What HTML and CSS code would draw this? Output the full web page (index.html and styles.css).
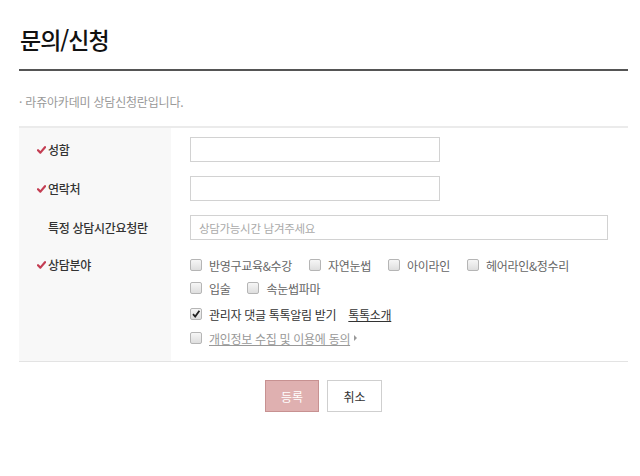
FILE: index.html
```html
<!DOCTYPE html>
<html lang="ko">
<head>
<meta charset="utf-8">
<link rel="stylesheet" href="styles.css">
</head>
<body>
<div class="page">
  <h1 class="title">문의/신청</h1>
  <p class="intro">· 라쥬아카데미 상담신청란입니다.</p>
  <div class="form-table">
    <div class="label"><span class="req"><svg width="9" height="8" viewBox="0 0 9 8"><path d="M1 4.2 L3.4 6.6 L8 1.2" fill="none" stroke="#c43d52" stroke-width="2.2" stroke-linecap="round" stroke-linejoin="round"/></svg></span>성함</div>
    <div class="field"><span class="input short"></span></div>

    <div class="label"><span class="req"><svg width="9" height="8" viewBox="0 0 9 8"><path d="M1 4.2 L3.4 6.6 L8 1.2" fill="none" stroke="#c43d52" stroke-width="2.2" stroke-linecap="round" stroke-linejoin="round"/></svg></span>연락처</div>
    <div class="field"><span class="input short"></span></div>

    <div class="label"><span class="req"></span>특정 상담시간요청란</div>
    <div class="field"><span class="input long"><span class="ph">상담가능시간 남겨주세요</span></span></div>

    <div class="label top"><span class="req"><svg width="9" height="8" viewBox="0 0 9 8"><path d="M1 4.2 L3.4 6.6 L8 1.2" fill="none" stroke="#c43d52" stroke-width="2.2" stroke-linecap="round" stroke-linejoin="round"/></svg></span>상담분야</div>
    <div class="field checks">
      <div class="line">
        <span class="opt"><span class="cb"></span>반영구교육&amp;수강</span>
        <span class="opt"><span class="cb"></span>자연눈썹</span>
        <span class="opt"><span class="cb"></span>아이라인</span>
        <span class="opt"><span class="cb"></span>헤어라인&amp;정수리</span>
      </div>
      <div class="line">
        <span class="opt"><span class="cb"></span>입술</span>
        <span class="opt"><span class="cb"></span>속눈썹파마</span>
      </div>
      <div class="line agree">
        <span class="opt dark"><span class="cb on"><svg width="10" height="10" viewBox="0 0 10 10"><path d="M2 5.2 L4.2 7.6 L8.4 1.8" fill="none" stroke="#222" stroke-width="1.8"/></svg></span>관리자 댓글 톡톡알림 받기</span>
        <a class="link dark">톡톡소개</a>
      </div>
      <div class="line">
        <span class="opt"><span class="cb"></span><a class="link">개인정보 수집 및 이용에 동의</a><span class="arrow"></span></span>
      </div>
    </div>
  </div>
  <div class="buttons">
    <span class="btn submit">등록</span>
    <span class="btn cancel">취소</span>
  </div>
</div>
</body>
</html>
```

FILE: styles.css
```css
* { box-sizing: border-box; }
html, body { margin: 0; padding: 0; background: #fff; }
body {
  font-family: "Noto Sans CJK KR", "Noto Sans", sans-serif;
  font-size: 12px;
  color: #333;
}
.page {
  width: 609px;
  margin-left: 19px;
  padding-top: 22px;
}
.title {
  margin: 0;
  padding: 0 0 13px 1px;
  font-size: 23px;
  line-height: 34px;
  font-weight: 500;
  color: #111;
  letter-spacing: -1px;
  border-bottom: 2px solid #555;
}
.intro {
  margin: 0;
  padding: 23px 0 16px;
  font-size: 12px;
  line-height: 16px;
  color: #999;
  letter-spacing: -0.2px;
}
.form-table {
  display: grid;
  grid-template-columns: 152px 1fr;
  row-gap: 14px;
  padding: 9px 0 12px;
  border-top: 2px solid #ebebeb;
  border-bottom: 1px solid #e3e3e3;
  background: linear-gradient(to right, #f8f8f8 152px, #fff 152px);
}
.label {
  display: flex;
  align-items: center;
  padding-left: 18px;
  font-size: 12px;
  font-weight: 500;
  color: #333;
  letter-spacing: -0.3px;
}
.label.top { align-items: flex-start; line-height: 22px; }
.req {
  display: inline-flex;
  align-items: center;
  width: 11px;
  height: 22px;
  flex: none;
}
.field { padding-left: 19px; }
.input {
  display: flex;
  align-items: center;
  height: 25px;
  border: 1px solid #d2d2d2;
  background: #fff;
  padding-left: 8px;
}
.input.short { width: 250px; }
.input.long { width: 418px; }
.ph { color: #aaa; font-size: 11.5px; letter-spacing: -0.3px; }
.checks { display: flex; flex-direction: column; }
.line {
  display: flex;
  align-items: center;
  height: 22px;
  gap: 17px;
}
.line + .line { margin-top: 1px; }
.line.agree { margin-top: 3px; height: 24px; gap: 12px; }
.opt {
  display: inline-flex;
  align-items: center;
  color: #666;
  letter-spacing: -0.3px;
}
.opt.dark { color: #333; }
.cb {
  display: inline-flex;
  align-items: center;
  justify-content: center;
  width: 12px;
  height: 12px;
  margin-right: 7px;
  border: 1px solid #b5b5b5;
  border-radius: 2px;
  background: linear-gradient(#f6f6f6, #dedede);
}
.cb.on svg { display: block; }
.link {
  color: #999;
  text-decoration: underline;
  letter-spacing: -0.3px;
}
.link.dark { color: #333; }
.arrow {
  display: inline-block;
  margin-left: 4px;
  width: 0;
  height: 0;
  border-left: 3px solid #999;
  border-top: 3px solid transparent;
  border-bottom: 3px solid transparent;
}
.buttons {
  display: flex;
  justify-content: center;
  gap: 8px;
  margin-top: 18px;
}
.btn {
  display: inline-flex;
  align-items: center;
  justify-content: center;
  height: 32px;
  font-size: 12px;
}
.submit {
  width: 54px;
  background: #dfb0b0;
  border: 1px solid #c79191;
  color: #fff;
}
.cancel {
  width: 55px;
  background: #fff;
  border: 1px solid #cfcfcf;
  color: #333;
}
```
